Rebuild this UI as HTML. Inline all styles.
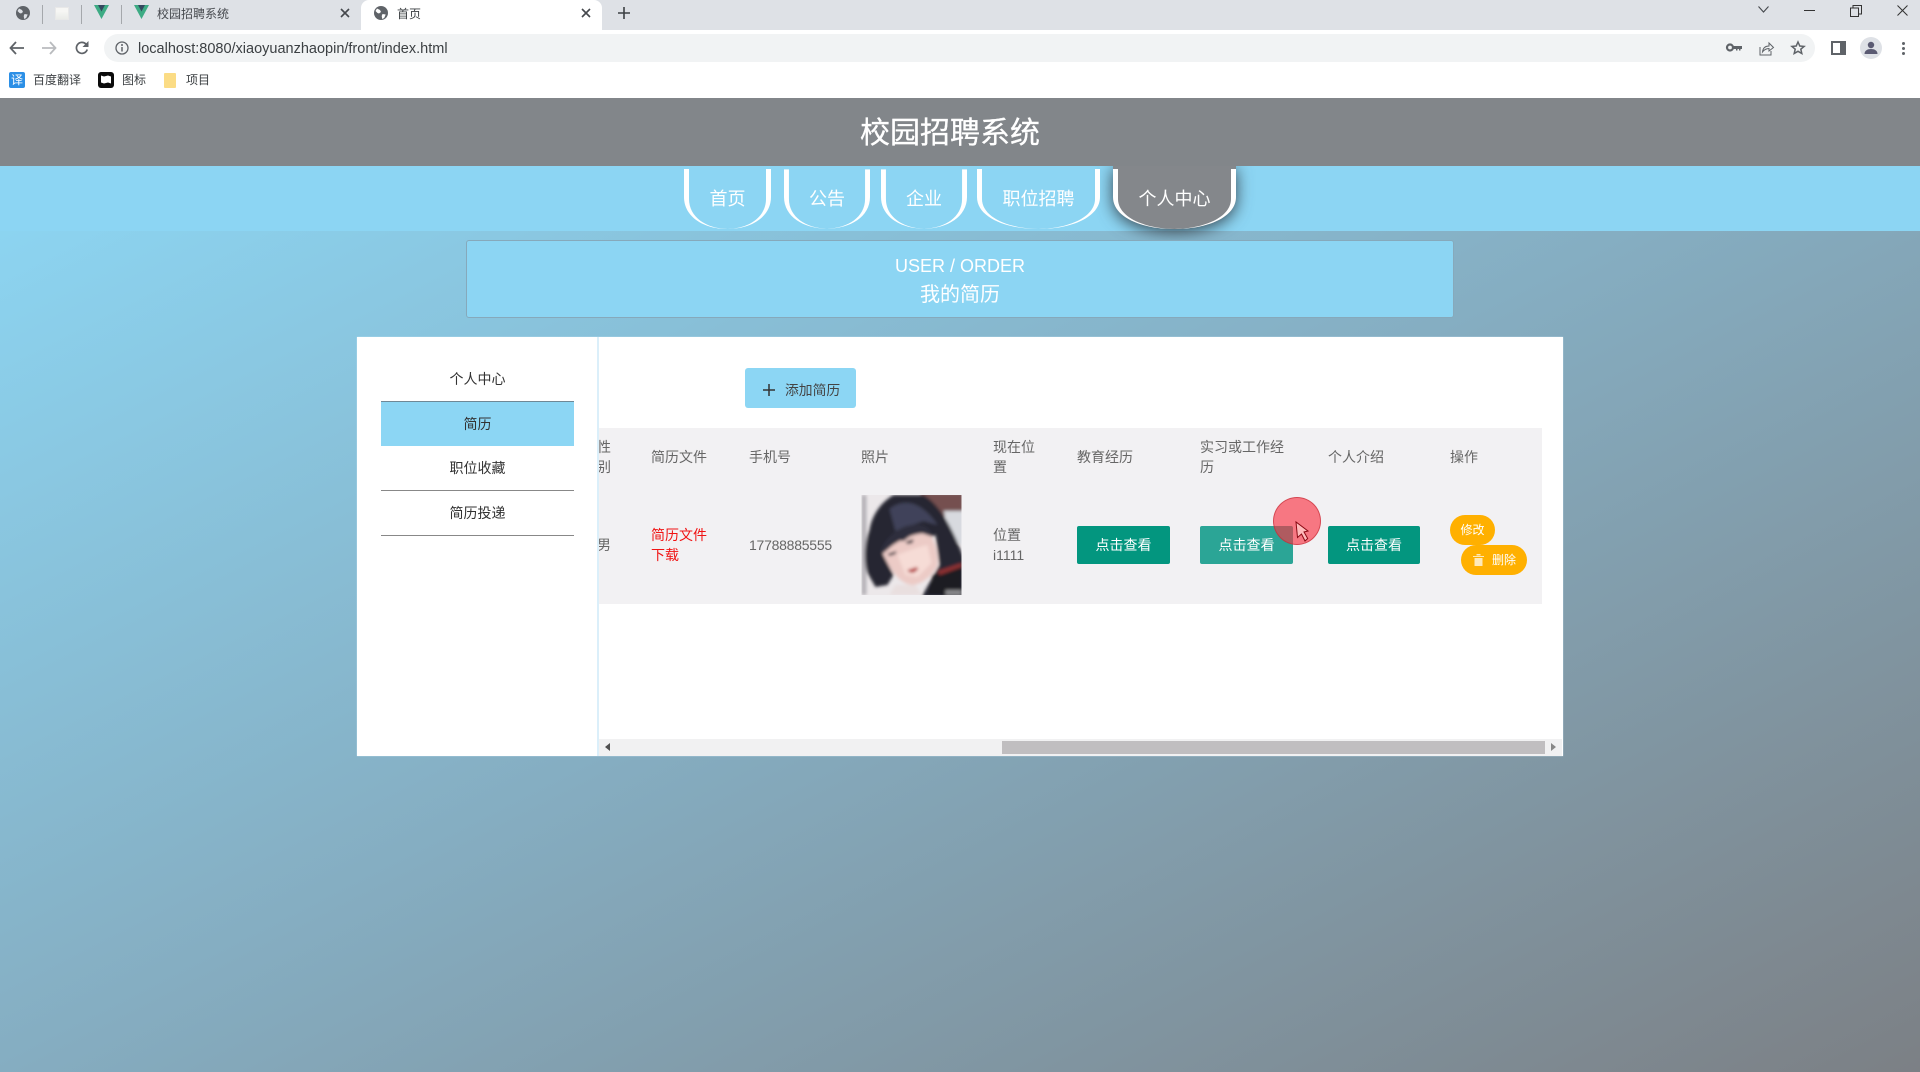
<!DOCTYPE html>
<html lang="zh-CN">
<head>
<meta charset="utf-8">
<title>首页</title>
<style>
html,body{margin:0;padding:0;width:1920px;height:1072px;overflow:hidden;background:#fff;font-family:"Liberation Sans","Noto Sans CJK SC",sans-serif}
*{box-sizing:border-box}
.a{position:absolute}
.t{position:absolute;white-space:nowrap;line-height:20px;font-size:14px;color:#666}
.c{text-align:center}
.nav{position:absolute;top:169px;height:60px;color:#fff;font-size:18px;line-height:60px;text-align:center}
.btn{position:absolute;top:526px;height:38px;border-radius:2px;background:#03967f;color:#fff;font-size:14px;line-height:38px;text-align:center}
.pill{position:absolute;height:30px;border-radius:15px;background:#ffb000;color:#fff;font-size:12px;line-height:30px}
svg{position:absolute;overflow:visible}
</style>
</head>
<body>
<!-- Browser chrome -->
<div class="a" style="left:0;top:0;width:1920px;height:30px;background:#dee1e6"></div>
<div class="a" style="left:361px;top:0;width:241px;height:30px;background:#fff;border-radius:8px 8px 0 0"></div>
<div class="a" style="left:42px;top:5px;width:1px;height:19px;background:#a5a8ac"></div>
<div class="a" style="left:81px;top:5px;width:1px;height:19px;background:#a5a8ac"></div>
<div class="a" style="left:121px;top:5px;width:1px;height:19px;background:#a5a8ac"></div>
<svg style="left:16px;top:6px" width="14" height="14" viewBox="0 0 14 14"><circle cx="7" cy="7" r="7" fill="#5f6368"/><path d="M3 2.500l3 1.500 1 2-2 1.500-1.500-.5L1.500 5zM8.500 8l3.200.5-1.500 3.500-2 1-.5-3z" fill="#dee1e6"/></svg>
<div class="a" style="left:55px;top:7px;width:14px;height:13px;background:linear-gradient(#f6f6f4 30%,#e9ebe8);border:1px solid #e8e8e8"></div>
<svg style="left:94px;top:5px" width="15" height="14" viewBox="0 0 15 14"><path d="M0 0h15L7.500 14z" fill="#3dab84"/><path d="M4 0h7L7.500 6.500z" fill="#33495f"/></svg>
<svg style="left:134px;top:5px" width="15" height="14" viewBox="0 0 15 14"><path d="M0 0h15L7.500 14z" fill="#3dab84"/><path d="M4 0h7L7.500 6.500z" fill="#33495f"/></svg>
<div class="t" style="left:157px;top:4px;font-size:12px;color:#45484d">校园招聘系统</div>
<svg style="left:340px;top:8px" width="10" height="10" viewBox="0 0 10 10"><path d="M1 1l8 8M9 1l-8 8" stroke="#45484d" stroke-width="1.600"/></svg>
<svg style="left:374px;top:6px" width="14" height="14" viewBox="0 0 14 14"><circle cx="7" cy="7" r="7" fill="#5f6368"/><path d="M3 2.500l3 1.500 1 2-2 1.500-1.500-.5L1.500 5zM8.500 8l3.200.5-1.500 3.500-2 1-.5-3z" fill="#fff"/></svg>
<div class="t" style="left:397px;top:4px;font-size:12px;color:#3c4043">首页</div>
<svg style="left:581px;top:8px" width="10" height="10" viewBox="0 0 10 10"><path d="M1 1l8 8M9 1l-8 8" stroke="#45484d" stroke-width="1.600"/></svg>
<svg style="left:618px;top:7px" width="12" height="12" viewBox="0 0 12 12"><path d="M6 0v12M0 6h12" stroke="#3c4043" stroke-width="1.600"/></svg>
<svg style="left:1758px;top:6px" width="11" height="7" viewBox="0 0 11 7"><path d="M.5.5l5 5.500 5-5.500" fill="none" stroke="#45484d" stroke-width="1.100"/></svg>
<div class="a" style="left:1804px;top:10px;width:11px;height:1px;background:#333"></div>
<svg style="left:1850px;top:5px" width="12" height="12" viewBox="0 0 12 12"><rect x=".5" y="3" width="8" height="8.500" fill="none" stroke="#333"/><path d="M3 3V.5h8.500V9H8.500" fill="none" stroke="#333"/></svg>
<svg style="left:1897px;top:5px" width="11" height="11" viewBox="0 0 11 11"><path d="M.5.5l10 10M10.500.5l-10 10" stroke="#333" stroke-width="1"/></svg>

<div class="a" style="left:0;top:30px;width:1920px;height:68px;background:#fff"></div>
<svg style="left:9px;top:41px" width="16" height="14" viewBox="0 0 16 14"><path d="M7 1L1.500 7 7 13M1.500 7H15" fill="none" stroke="#5f6368" stroke-width="1.800"/></svg>
<svg style="left:41px;top:41px" width="16" height="14" viewBox="0 0 16 14"><path d="M9 1l5.500 6L9 13M14.500 7H1" fill="none" stroke="#b9bbbe" stroke-width="1.800"/></svg>
<svg style="left:75px;top:41px" width="14" height="14" viewBox="0 0 14 14"><path d="M12.200 8.500A5.500 5.500 0 1 1 11 3.200" fill="none" stroke="#5f6368" stroke-width="1.700"/><path d="M13.500 0v6h-6z" fill="#5f6368"/></svg>
<div class="a" style="left:104px;top:34px;width:1711px;height:28px;border-radius:14px;background:#f1f3f4"></div>
<svg style="left:115px;top:41px" width="14" height="14" viewBox="0 0 14 14"><circle cx="7" cy="7" r="6" fill="none" stroke="#5f6368" stroke-width="1.300"/><path d="M7 6v4.500" stroke="#5f6368" stroke-width="1.500"/><circle cx="7" cy="4" r="1" fill="#5f6368"/></svg>
<div class="t" style="left:138px;top:39px;font-size:14.500px;color:#3c4043">localhost:8080/xiaoyuanzhaopin/front/index.html</div>
<svg style="left:1726px;top:42px" width="16" height="11" viewBox="0 0 16 11"><circle cx="4" cy="5.500" r="3" fill="none" stroke="#5f6368" stroke-width="2.200"/><path d="M7 4h9v3h-1.500v1.500H13V7h-1.500v1.500H10V7H7z" fill="#5f6368"/></svg>
<svg style="left:1759px;top:41px" width="15" height="15" viewBox="0 0 15 15"><path d="M1 6v8h11V10" fill="none" stroke="#5f6368"/><path d="M3.500 11c.5-4 3-6 6.500-6V2l4.500 4.500L10 10V7.500C7.500 7.500 5 9 3.500 11z" fill="none" stroke="#5f6368"/></svg>
<svg style="left:1791px;top:41px" width="14" height="14" viewBox="0 0 14 14"><path d="M7 1l1.800 4 4.300.4-3.300 2.800 1 4.300L7 10.300 3.200 12.500l1-4.300L.9 5.400l4.300-.4z" fill="none" stroke="#5f6368" stroke-width="1.500"/></svg>
<div class="a" style="left:1831px;top:41px;width:15px;height:14px;background:#5f6368;border:2px solid #5f6368"><div style="width:7px;height:10px;background:#fff"></div></div>
<div class="a" style="left:1860px;top:37px;width:22px;height:22px;border-radius:50%;background:#dee1e6"></div>
<svg style="left:1864px;top:41px" width="14" height="14" viewBox="0 0 14 14"><circle cx="7" cy="4" r="3.200" fill="#5a5a72"/><path d="M.5 13c0-3.500 3-5 6.500-5s6.500 1.500 6.500 5z" fill="#5a5a72"/></svg>
<div class="a" style="left:1902px;top:42px;width:3px;height:3px;border-radius:50%;background:#5f6368;box-shadow:0 5px 0 #5f6368,0 10px 0 #5f6368"></div>

<div class="a c" style="left:9px;top:72px;width:16px;height:16px;border-radius:2px;background:#2b8fe6;color:#fff;font-size:12px;line-height:16px">译</div>
<div class="t" style="left:33px;top:70px;font-size:12px;color:#3c4043">百度翻译</div>
<svg style="left:98px;top:72px" width="16" height="16" viewBox="0 0 16 16"><rect width="16" height="16" rx="3" fill="#0b0b0b"/><path d="M3 3.500l3 1 4-1 3 1v7l-3-1-4 1-3-1z" fill="#fff"/></svg>
<div class="t" style="left:122px;top:70px;font-size:12px;color:#3c4043">图标</div>
<div class="a" style="left:164px;top:73px;width:12px;height:15px;background:#fbdc85;border-radius:1px"></div>
<div class="t" style="left:186px;top:70px;font-size:12px;color:#3c4043">项目</div>

<!-- Page -->
<div class="a" style="left:0;top:98px;width:1920px;height:974px;background:linear-gradient(to bottom right,#8ddaf8 0%,#85adc1 50%,#7c8085 100%)"></div>
<div class="a" style="left:0;top:166px;width:1920px;height:65px;background:#8cd5f3"></div>
<!-- active tab fill + shadow -->
<svg style="left:1113px;top:166px;filter:drop-shadow(0 3px 8px rgba(40,45,50,.85))" width="123" height="63" viewBox="0 0 123 63"><path d="M0 0V31C0 51 28 63 61.500 63S123 51 123 31V0z" fill="#84878b"/></svg>
<div class="a" style="left:0;top:98px;width:1920px;height:68px;background:#82868a"></div>
<div class="a c" style="left:0;top:112px;width:1900px;font-size:30px;line-height:44px;color:#fff;-webkit-text-stroke:.3px #fff">校园招聘系统</div>

<!-- tab crescents -->
<svg style="left:684px;top:169px" width="87" height="60" viewBox="0 0 87 60"><path id="k1" d="M0 0V28C0 48 20 60 43.500 60 22 59.500 5 48 5 30V0z" fill="#fff"/><path d="M87 0V28C87 48 67 60 43.500 60 65 59.500 82 48 82 30V0z" fill="#fff"/></svg>
<svg style="left:784px;top:169px" width="86" height="60" viewBox="0 0 87 60"><path d="M0 0V28C0 48 20 60 43.500 60 22 59.500 5 48 5 30V0z" fill="#fff"/><path d="M87 0V28C87 48 67 60 43.500 60 65 59.500 82 48 82 30V0z" fill="#fff"/></svg>
<svg style="left:881px;top:169px" width="86" height="60" viewBox="0 0 87 60"><path d="M0 0V28C0 48 20 60 43.500 60 22 59.500 5 48 5 30V0z" fill="#fff"/><path d="M87 0V28C87 48 67 60 43.500 60 65 59.500 82 48 82 30V0z" fill="#fff"/></svg>
<svg style="left:977px;top:169px" width="123" height="60" viewBox="0 0 123 60"><path d="M0 0V28C0 48 28 60 61.500 60 31 59.500 5 48 5 30V0z" fill="#fff"/><path d="M123 0V28C123 48 95 60 61.500 60 92 59.500 118 48 118 30V0z" fill="#fff"/></svg>
<svg style="left:1113px;top:169px" width="123" height="60" viewBox="0 0 123 60"><path d="M0 0V28C0 48 28 60 61.500 60 31 59.500 5 48 5 30V0z" fill="#fff"/><path d="M123 0V28C123 48 95 60 61.500 60 92 59.500 118 48 118 30V0z" fill="#fff"/></svg>
<div class="nav" style="left:684px;width:87px">首页</div>
<div class="nav" style="left:784px;width:86px">公告</div>
<div class="nav" style="left:881px;width:86px">企业</div>
<div class="nav" style="left:977px;width:123px">职位招聘</div>
<div class="nav" style="left:1113px;width:123px">个人中心</div>

<div class="a c" style="left:466px;top:240px;width:988px;height:78px;background:#8cd5f3;border:1px solid #86a9bb;border-radius:3px;color:#fff;font-size:18px;line-height:28px;padding-top:11px">USER / ORDER<br><span style="font-size:20px;position:relative;top:1px">我的简历</span></div>

<!-- Container -->
<div class="a" style="left:357px;top:337px;width:1206px;height:419px;background:#fff;box-shadow:0 0 1px #cfeaf8"></div>
<div class="a" style="left:597px;top:337px;width:2px;height:419px;background:#dbeffa"></div>

<div class="t c" style="left:381px;top:369px;width:193px;color:#333">个人中心</div>
<div class="a" style="left:381px;top:401px;width:193px;height:45px;background:#8cd6f4;border-top:1px solid #6f8896"></div>
<div class="t c" style="left:381px;top:414px;width:193px;color:#333">简历</div>
<div class="t c" style="left:381px;top:458px;width:193px;color:#333">职位收藏</div>
<div class="a" style="left:381px;top:490px;width:193px;height:1px;background:#888"></div>
<div class="t c" style="left:381px;top:503px;width:193px;color:#333">简历投递</div>
<div class="a" style="left:381px;top:535px;width:193px;height:1px;background:#888"></div>

<div class="a" style="left:745px;top:368px;width:111px;height:40px;background:#8cd6f4;border-radius:3px"></div>
<svg style="left:763px;top:384px" width="12" height="12" viewBox="0 0 12 12"><path d="M6 0v12M0 6h12" stroke="#333" stroke-width="1.500"/></svg>
<div class="t" style="left:785px;top:381px;font-size:13.800px;color:#444">添加简历</div>

<!-- Table -->
<div class="a" style="left:599px;top:428px;width:943px;height:176px;background:#f2f1f3"></div>
<div class="a" style="left:599px;top:437px;width:20px;height:40px;overflow:hidden"><div class="t" style="left:-2px;top:0;line-height:20px">性<br>别</div></div>
<div class="t" style="left:651px;top:447px">简历文件</div>
<div class="t" style="left:749px;top:447px">手机号</div>
<div class="t" style="left:861px;top:447px">照片</div>
<div class="t" style="left:993px;top:437px">现在位<br>置</div>
<div class="t" style="left:1077px;top:447px">教育经历</div>
<div class="t" style="left:1200px;top:437px">实习或工作经<br>历</div>
<div class="t" style="left:1328px;top:447px">个人介绍</div>
<div class="t" style="left:1450px;top:447px">操作</div>

<div class="a" style="left:599px;top:535px;width:20px;height:20px;overflow:hidden"><div class="t" style="left:-2px;top:0">男</div></div>
<div class="t" style="left:651px;top:525px;color:#f01414">简历文件<br>下载</div>
<div class="t" style="left:749px;top:535px;letter-spacing:-.25px">17788885555</div>

<svg style="left:861px;top:495px" width="101" height="100" viewBox="0 0 100 100">
<defs><filter id="b" x="-5%" y="-5%" width="110%" height="110%"><feGaussianBlur stdDeviation="1.500"/></filter><clipPath id="cp"><rect width="100" height="100"/></clipPath></defs>
<g clip-path="url(#cp)"><rect width="100" height="100" fill="#ece8ea"/><g filter="url(#b)">
<path d="M0 0h5v100H0z" fill="#b5b2b8"/>
<path d="M58 -2h44v30L80 20z" fill="#74504f"/>
<path d="M82 16h20v35L92 45z" fill="#d8dadf"/>
<path d="M32 0C18 8 10 22 8 35 3 48 2 66 6 78l8 14 12-2 6-10L22 60l52-20 4 30-18 32h42V62C94 42 82 12 62 0z" fill="#262732"/>
<path d="M28 14C42 3 60 6 76 30L62 26 34 36z" fill="#41435a"/>
<path d="M21 58C30 50 48 37 68 38c6 9 9 22 8 33-6 10-14 17-24 19-12 0-22-12-31-32z" fill="#eccbc6"/>
<path d="M36 60c10-4 20-8 30-10l4 18-14 14-12-2z" fill="#f6dcd6"/>
<path d="M19 56C25 40 42 27 60 30c7 2 10 6 12 12L60 38l-10 2-8 6-6-1-6 6-8 7z" fill="#2d2e3c"/>
<path d="M26 59l9-3-1 3-6 2zM44 47l8-3-1 4-5 1z" fill="#2a2530"/>
<path d="M46 75l9-3 2 2-5 4-5-1z" fill="#b94a4c"/>
<path d="M66 100l5-20 29-11v31z" fill="#1c1b22"/>
<path d="M76 76l24-8v4l-22 8z" fill="#8f3133"/>
<path d="M34 90l20 0 6 10H28z" fill="#e9dfdf"/>
<path d="M84 95h16v5H84z" fill="#8a8a8d"/>
</g></g></svg>

<div class="t" style="left:993px;top:525px">位置<br>i1111</div>
<div class="btn" style="left:1077px;width:93px">点击查看</div>
<div class="btn" style="left:1200px;width:93px;background:#2ba596">点击查看</div>
<div class="btn" style="left:1328px;width:92px">点击查看</div>
<div class="pill c" style="left:1450px;top:515px;width:45px">修改</div>
<div class="pill" style="left:1461px;top:545px;width:66px"></div>
<svg style="left:1473px;top:554px" width="11" height="12" viewBox="0 0 11 12"><path d="M0 2h11v1H0zM3.500 0h4v1.500h-4zM1.500 4h8v8h-8z" fill="#ffe9b8"/></svg>
<div class="t" style="left:1492px;top:550px;font-size:12px;color:#fff">删除</div>

<!-- Scrollbar -->
<div class="a" style="left:599px;top:739px;width:963px;height:17px;background:#f1f1f2"></div>
<div class="a" style="left:1002px;top:741px;width:543px;height:13px;background:#c0bec0"></div>
<svg style="left:605px;top:743px" width="5" height="8" viewBox="0 0 5 8"><path d="M5 0v8L0 4z" fill="#505050"/></svg>
<svg style="left:1551px;top:743px" width="5" height="8" viewBox="0 0 5 8"><path d="M0 0v8l5-4z" fill="#888"/></svg>

<!-- Cursor highlight -->
<div class="a" style="left:1273px;top:497px;width:48px;height:48px;border-radius:50%;background:rgba(250,50,65,.64);border:1px solid rgba(190,40,50,.6)"></div>
<svg style="left:1290px;top:518px" width="24" height="28" viewBox="1290 518 24 28"><path d="M1296 522l1.500 15.500 4-3.500 3.500 7 2.700-2.500-3.700-6.500 4-1z" fill="#fbb" stroke="#8a0812" stroke-width="1"/></svg>
</body>
</html>
